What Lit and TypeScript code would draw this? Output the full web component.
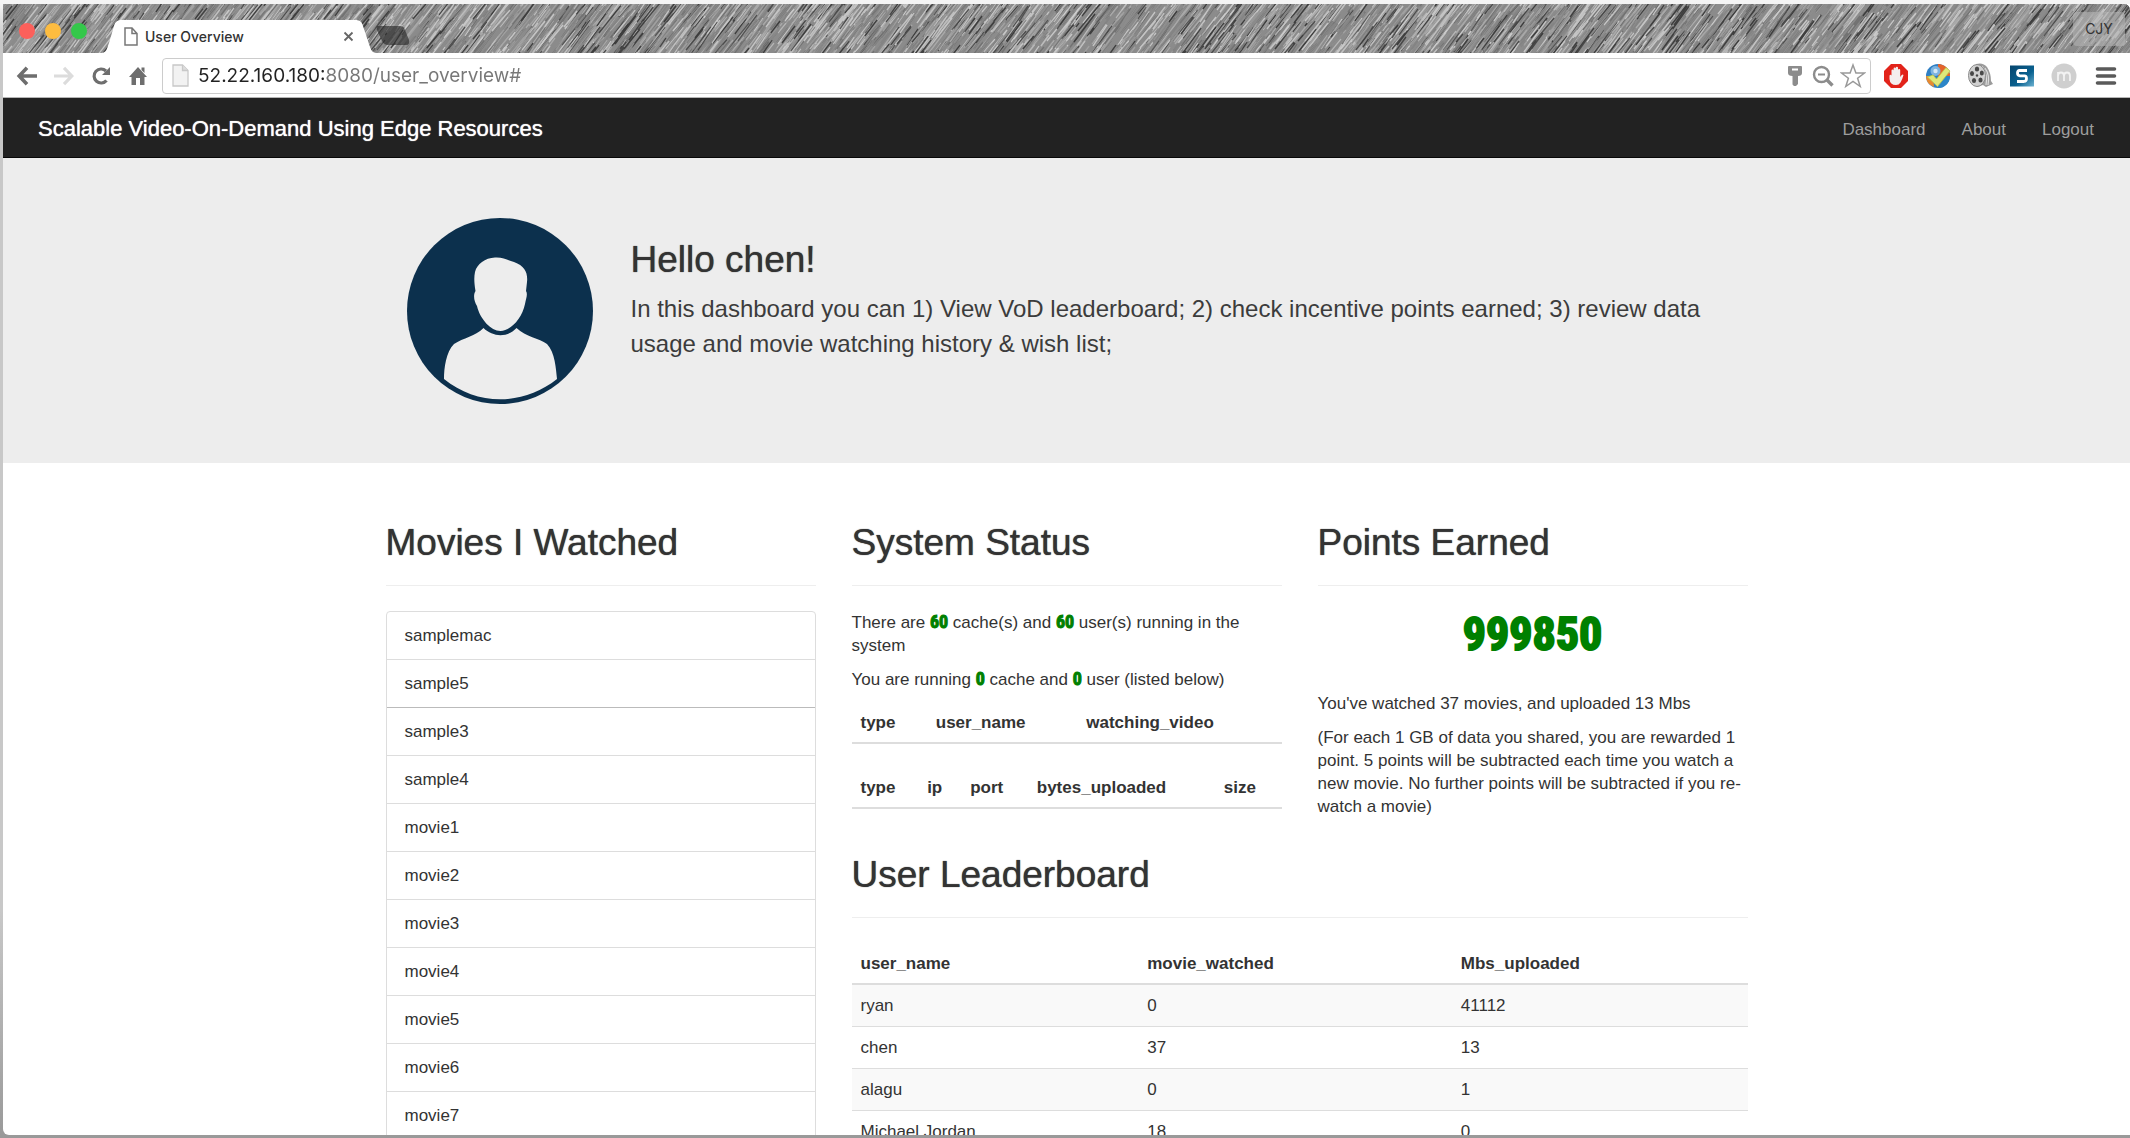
import { LitElement, html, css, svg } from "lit";
import { customElement } from "lit/decorators.js";

const movies = [
  "samplemac", "sample5", "sample3", "sample4", "movie1", "movie2",
  "movie3", "movie4", "movie5", "movie6", "movie7",
];

const leaders = [
  { name: "ryan", watched: 0, uploaded: 41112 },
  { name: "chen", watched: 37, uploaded: 13 },
  { name: "alagu", watched: 0, uploaded: 1 },
  { name: "Michael Jordan", watched: 18, uploaded: 0 },
];

/* Pencil strokes of the window theme, grouped by shade. */
function pencilStrokes(shadeCount: number, perShade: number): string[] {
  let seed = 20161;
  const rand = () => {
    seed = (seed * 1103515245 + 12345) % 2147483648;
    return seed / 2147483648;
  };
  const paths: string[] = [];
  for (let s = 0; s < shadeCount; s++) {
    let d = "";
    for (let i = 0; i < perShade; i++) {
      const x = Math.round(rand() * 2190 - 40);
      const y = Math.round(rand() * 80);
      const len = 8 + rand() * 26;
      const slope = 0.68 + rand() * 0.16;
      d += `M${x} ${y}l${Math.round(len * slope)} ${-Math.round(len)}`;
    }
    paths.push(d);
  }
  return paths;
}

const shades = ["#6a6a6a", "#b4b4b4", "#505050", "#c8c8c8", "#7c7c7c", "#404040", "#dadada", "#8e8e8e", "#a8a8a8", "#333", "#c8c8c8", "#858585", "#989898"];
const strokes = pencilStrokes(shades.length, 760);

@customElement("browser-chrome")
export class BrowserChrome extends LitElement {
  static styles = css`
    :host { display: block; font-family: Inter, Roboto, sans-serif; }
    * { box-sizing: border-box; }
    button { border: 0; padding: 0; background: none; display: flex; align-items: center; justify-content: center; }
    svg { display: block; }
    .strip {
      position: relative; height: 49px; overflow: hidden; background: #8b8b8b;
      display: flex; align-items: flex-end; padding-left: 16px; border-radius: 0 6px 0 0;
    }
    .texture { position: absolute; inset: 0; width: 100%; height: 100%; }
    .lights { position: relative; display: flex; gap: 10px; align-self: center; padding-top: 4px; }
    .light { width: 16px; height: 16px; border-radius: 50%; }
    .close { background: #fc605b; }
    .minimize { background: #fdbc40; }
    .expand { background: #34c84a; }
    .tab {
      position: relative; width: 274px; height: 33px; margin-left: 15px;
      display: flex; align-items: center; padding: 0 22px 0 22px;
    }
    .tabshape { position: absolute; inset: 0; }
    .tab > :not(.tabshape) { position: relative; }
    .tabtitle { font-size: 14px; font-weight: 500; line-height: 18px; color: #333; margin-left: 7px; flex: 1; }
    .newtab { position: relative; margin-bottom: 7px; }
    .profile {
      position: relative; margin: 0 5px 7px auto; width: 52px; height: 34px; border-radius: 4px;
      background: #b4b4b490; font: 14px/34px Inter, sans-serif; color: #333;
    }
    .toolbar {
      height: 45px; background: #fff; border-bottom: 1px solid #b5b5b5;
      display: flex; align-items: center; padding: 1px 11px 0 13px;
    }
    .nav { width: 22px; height: 24px; margin-right: 15px; }
    .nav:nth-of-type(4) { margin-right: 13px; }
    .omnibox {
      flex: 1; height: 36px; border: 1px solid #ccc; border-radius: 4px; background: #fff;
      display: flex; align-items: center; padding: 0 4px 0 9px; gap: 5px;
    }
    .url {
      flex: 1; min-width: 0; border: 0; outline: 0; padding: 0; margin-left: 4px; height: 28px;
      font: 19px/28px Inter, sans-serif; color: transparent;
      background: linear-gradient(90deg, #222 129px, #777 129px); background-clip: text; -webkit-background-clip: text;
    }
    .ext { display: flex; gap: 16px; margin-left: 12px; }
    .ext button { width: 26px; height: 26px; }
  `;

  render() {
    return html`
      <div class="strip">
        <svg class="texture" viewBox="0 0 2127 49" preserveAspectRatio="xMidYMid slice" fill="none" stroke-width="1.3" aria-hidden="true">
          ${strokes.map((d, i) => svg`<path d=${d} stroke=${shades[i]} stroke-opacity=".75" />`)}
        </svg>
        <div class="lights">
          <button class="light close" aria-label="Close window"></button>
          <button class="light minimize" aria-label="Minimize window"></button>
          <button class="light expand" aria-label="Expand window"></button>
        </div>
        <div class="tab">
          <svg class="tabshape" width="274" height="33" viewBox="0 0 274 33">
            <path d="M0 33C5 32 5 28 7 23L12 6C13 2 15 0 20 0H253C258 0 260 2 261 6L267 24C269 29 269 32 274 33Z" fill="#fff" />
          </svg>
          <svg width="14" height="19" viewBox="0 0 14 19" fill="none" stroke="#777" stroke-width="1.5">
            <path d="M1 1H8L13 6.500V18H1ZM8 1V6.500H13" />
          </svg>
          <span class="tabtitle">User Overview</span>
          <button aria-label="Close tab">
            <svg width="11" height="11" viewBox="0 0 11 11" stroke="#666" stroke-width="1.800"><path d="M1.500 1.500 9.500 9.500M9.500 1.500 1.500 9.500" /></svg>
          </button>
        </div>
        <button class="newtab" aria-label="New tab">
          <svg width="36" height="20" viewBox="0 0 36 20"><path d="M2 0H24Q28 0 29 4L33 14Q34 19 30 19H12Q8 19 6 15L1 4Q0 0 2 0Z" fill="#222" fill-opacity=".6" /></svg>
        </button>
        <button class="profile">CJY</button>
      </div>
      <div class="toolbar">
        <button class="nav" aria-label="Back">
          <svg width="22" height="20" viewBox="0 0 22 20" fill="none" stroke="#6e6e6e" stroke-width="3.600"><path d="M21 10H4M11 1.800 3.200 10 11 18.200" /></svg>
        </button>
        <button class="nav" aria-label="Forward">
          <svg width="22" height="20" viewBox="0 0 22 20" fill="none" stroke="#dcdcdc" stroke-width="3.200"><path d="M1 10H18M11 1.800 18.800 10 11 18.200" /></svg>
        </button>
        <button class="nav" aria-label="Reload">
          <svg width="20" height="20" viewBox="0 0 20 20"><path d="M15.500 14.500A7 7 0 1 1 15 5" fill="none" stroke="#6e6e6e" stroke-width="3.200" /><path d="M19 1V9H11Z" fill="#6e6e6e" /></svg>
        </button>
        <button class="nav" aria-label="Home">
          <svg width="18" height="20" viewBox="0 0 18 20" fill="#6e6e6e"><path d="M9 1 18 11H15.500V19H11V12H7V19H2.500V11H0ZM12.500 1.500H15.500V7L12.500 4Z" /></svg>
        </button>
        <div class="omnibox">
          <svg width="17" height="23" viewBox="0 0 17 23" fill="#f2f2f2" stroke="#c8c8c8" stroke-width="1.300">
            <path d="M1 1H10.500L16 6.500V22H1Z" /><path d="M10.500 1V6.500H16" fill="#ddd" />
          </svg>
          <input class="url" aria-label="Address" value="52.22.160.180:8080/user_overview#" />
          <button aria-label="Saved password">
            <svg width="22" height="24" viewBox="0 0 22 24" fill="#8c8c8c"><path fill-rule="evenodd" d="M5 2H17Q18 2 18 3V9Q18 12 14 12V20L12 22H10L8.500 20.500V12Q4 12 4 9V3Q4 2 5 2ZM8 4.500V6.500H14V4.500Z" /></svg>
          </button>
          <button aria-label="Zoom">
            <svg width="24" height="24" viewBox="0 0 24 24" fill="none" stroke="#8c8c8c"><circle cx="10.500" cy="10.500" r="7.500" stroke-width="2.400" /><path d="M16 16 21.500 21.500" stroke-width="3.400" /><path d="M7 10.500H14" stroke-width="1.800" /></svg>
          </button>
          <button aria-label="Bookmark this page">
            <svg width="26" height="26" viewBox="0 0 26 26" fill="#fff" stroke="#999" stroke-width="1.500"><path d="M13 2 15.900 10H24.500L17.600 15.200 20.200 23.500 13 18.500 5.800 23.500 8.400 15.200 1.500 10H10.100Z" /></svg>
          </button>
        </div>
        <div class="ext">
          <button aria-label="Ad blocker">
            <svg width="26" height="26" viewBox="0 0 26 26"><path d="M8 1H18L25 8V18L18 25H8L1 18V8Z" fill="#e2231a" /><path d="M6.500 13Q6.500 11.800 7.500 11.800T8.500 13V7.500Q8.500 6.500 9.500 6.500T10.600 7.500V5.500Q10.600 4.500 11.700 4.500T12.800 5.500V4.800Q12.800 3.700 13.900 3.700T15 4.800V7Q15 6 16.100 6T17.200 7V14L18.500 12.200Q19.500 11 20.500 12Q19.500 16 17.500 19.500Q16 22 13 22Q7 22 6.500 16Z" fill="#f4eeee" /></svg>
          </button>
          <button aria-label="Site check">
            <svg width="26" height="26" viewBox="0 0 26 26"><circle cx="13" cy="13" r="12" fill="#2f7fc4" /><path d="M13 1A12 12 0 0 1 25 13L13 13Z" fill="#e5642b" /><path d="M25 13A12 12 0 0 1 13 25V13Z" fill="#2c86c8" /><path d="M1 13A12 12 0 0 0 9 24L8 13Z" fill="#e98a30" /><circle cx="10.500" cy="8" r="5" fill="#7db4e0" /><circle cx="10.500" cy="8" r="2.200" fill="#d5e8f6" /><path d="M2.500 14 8 12 11.500 16 21 4.500 25 8 12.500 23.500Z" fill="#dfe87a" stroke="#b9c64a" stroke-width=".8" /></svg>
          </button>
          <button aria-label="Film library">
            <svg width="26" height="26" viewBox="0 0 26 26"><path d="M9 1Q16 -1 20 4Q24 10 24 18L26 21 19 24 16 22 10 24Z" fill="#9b9b9b" /><path d="M18 5Q23 12 21 22M15 3Q21 11 19 22" fill="none" stroke="#ddd" stroke-width="1.200" /><ellipse cx="10" cy="12.500" rx="8.500" ry="11" fill="#d0d0d0" stroke="#8a8a8a" /><g fill="#484848"><ellipse cx="10" cy="6" rx="2.200" ry="2.500" /><ellipse cx="5" cy="10.500" rx="2" ry="2.500" /><ellipse cx="14.800" cy="10" rx="2" ry="2.500" /><ellipse cx="7" cy="17.500" rx="2.100" ry="2.500" /><ellipse cx="13.500" cy="17" rx="2.100" ry="2.500" /><circle cx="10" cy="12.500" r="1.200" /></g></svg>
          </button>
          <button aria-label="S extension">
            <svg width="26" height="26" viewBox="0 0 26 26"><defs><linearGradient id="blue" x1="0" y1="0" x2="1" y2="1"><stop offset="0" stop-color="#05456d" /><stop offset=".6" stop-color="#0a6190" /><stop offset="1" stop-color="#6db3d2" /></linearGradient></defs><rect x="1" y="2.500" width="24" height="21" fill="url(#blue)" /><path d="M18 7.500H10.500Q8.500 7.500 8.500 10T11 12.800H15.500Q17.500 12.800 17.500 15.400T15 18.500H8" fill="none" stroke="#fff" stroke-width="2.800" /></svg>
          </button>
          <button aria-label="m extension">
            <svg width="26" height="26" viewBox="0 0 26 26"><circle cx="13" cy="13" r="12.500" fill="#cfcfcf" /><path d="M7 18V9M7 13Q7 9.500 10 9.500T13 13V18M13 13Q13 9.500 16 9.500T19 13V18" fill="none" stroke="#f2f2f2" stroke-width="1.800" /></svg>
          </button>
          <button aria-label="Menu">
            <svg width="22" height="20" viewBox="0 0 22 20" stroke="#5a5a5a" stroke-width="3.600" stroke-linecap="round"><path d="M2.500 3H19.500M2.500 10H19.500M2.500 17H19.500" /></svg>
          </button>
        </div>
      </div>
    `;
  }
}

@customElement("app-root")
export class AppRoot extends LitElement {
  static styles = css`
    :host {
      display: block; box-sizing: border-box; height: 100vh; overflow: hidden;
      padding: 4px 0 3px 3px; background: linear-gradient(#f4f4f4 4px, #c8c8c8 40px, #c8c8c8 80%, #999 100%);
      font: 17px/23px "Liberation Sans", Arial, sans-serif; color: #333;
    }
    * { box-sizing: border-box; }
    h1, h2, p, ul { margin: 0; padding: 0; font-weight: 400; }
    .window { height: 100%; overflow: hidden; background: #fff; border-radius: 0 0 0 6px; }
    .navbar {
      height: 60px; background: #222; border-bottom: 1px solid #080808;
      display: flex; align-items: center; justify-content: space-between; padding: 3px 36px 0 35px;
    }
    a { text-decoration: none; }
    .brand { color: #fff; font-size: 22px; line-height: 26px; text-shadow: 0 0 1px #fff; }
    .links { display: flex; gap: 36px; }
    .links a { color: #9d9d9d; }
    .container { max-width: 1362px; margin: 0 auto; }
    .hero { background: #ededed; padding: 60px 0 59px; }
    .intro { display: flex; gap: 38px; padding-left: 21px; }
    .avatar { flex: none; display: block; }
    .hello { padding-top: 21px; }
    h1, h2 { font-size: 37px; line-height: 41px; text-shadow: 0 0 1px #333; }
    h1 { margin-bottom: 11px; }
    .lead { font-size: 24px; line-height: 35px; color: #3c3c3c; }
    .content { display: grid; grid-template-columns: repeat(3, minmax(0, 1fr)); column-gap: 36px; padding-top: 59px; }
    .main { grid-column: span 2; }
    .stats { display: grid; grid-template-columns: repeat(2, minmax(0, 1fr)); column-gap: 36px; margin-bottom: 22px; }
    h2 { padding-bottom: 22px; border-bottom: 1px solid #eee; margin-bottom: 25px; }
    p { margin-bottom: 11px; }
    .list { list-style: none; border: 1px solid #ddd; border-radius: 4px; }
    .list li { padding: 12px 18px; border-bottom: 1px solid #ddd; }
    .list li:nth-child(2) { border-bottom-color: #bbb; }
    .num, .points { font-family: Impact, "Liberation Sans Narrow", "Roboto Condensed", sans-serif; font-weight: 700; color: #008000; }
    .num { font-size: 18px; line-height: 20px; -webkit-text-stroke: 1px #008000; }
    .points { font-size: 46px; line-height: 46px; text-align: center; margin-bottom: 35px; -webkit-text-stroke: 2px #008000; }
    table { width: 100%; table-layout: fixed; border-spacing: 0; margin-bottom: 23px; }
    th, td { text-align: left; padding: 9px; white-space: nowrap; }
    th { border-bottom: 2px solid #ddd; padding-bottom: 8px; }
    td { border-bottom: 1px solid #ddd; }
    tbody tr:nth-child(odd) { background: #f9f9f9; }
    .w15 { width: 15.5%; }
    .w10 { width: 10%; }
    .w17 { width: 17.5%; }
    .w35 { width: 35%; }
    .w44 { width: 43.5%; }
    .w32 { width: 32%; }
  `;

  render() {
    return html`
      <div class="window">
        <browser-chrome></browser-chrome>
        <nav class="navbar">
          <a class="brand" href="#">Scalable Video-On-Demand Using Edge Resources</a>
          <div class="links"><a href="#">Dashboard</a><a href="#">About</a><a href="#">Logout</a></div>
        </nav>
        <header class="hero">
          <div class="container intro">
            <svg class="avatar" width="186" height="186" viewBox="0 0 186 186" role="img" aria-label="User avatar">
              <circle cx="93" cy="93" r="93" fill="#0c304d" />
              <g fill="#ededed">
                <path d="M88 39.500C96 39 100 42 107 44C118 48 121 55 120 64L119 73C121 76 119 81 118 86C115 101 103 113 93.500 113C84 113 73 101 70 88C67 83 66 77 68.500 73C67 64 67 59 68 54C70 46 78 40 88 39.500Z" />
                <path d="M76.500 110C86 119.500 101 119.500 109.500 110C119 119 132 120 140 126C148 134 149 151 150 161C116 188 70 188 37 161C37 150 39 134 47 126C56 120 69 118 76.500 110Z" />
              </g>
            </svg>
            <div class="hello">
              <h1>Hello chen!</h1>
              <p class="lead">In this dashboard you can 1) View VoD leaderboard; 2) check incentive points earned; 3) review data usage and movie watching history &amp; wish list;</p>
            </div>
          </div>
        </header>
        <main class="container content">
          <section>
            <h2>Movies I Watched</h2>
            <ul class="list">${movies.map((m) => html`<li>${m}</li>`)}</ul>
          </section>
          <div class="main">
            <div class="stats">
              <section>
                <h2>System Status</h2>
                <p>There are <span class="num">60</span> cache(s) and <span class="num">60</span> user(s) running in the system</p>
                <p>You are running <span class="num">0</span> cache and <span class="num">0</span> user (listed below)</p>
                <table>
                  <thead><tr><th class="w17">type</th><th class="w35">user_name</th><th>watching_video</th></tr></thead>
                </table>
                <table>
                  <thead><tr><th class="w15">type</th><th class="w10">ip</th><th class="w15">port</th><th class="w44">bytes_uploaded</th><th>size</th></tr></thead>
                </table>
              </section>
              <section>
                <h2>Points Earned</h2>
                <div class="points">999850</div>
                <p>You've watched 37 movies, and uploaded 13 Mbs</p>
                <p>(For each 1 GB of data you shared, you are rewarded 1 point. 5 points will be subtracted each time you watch a new movie. No further points will be subtracted if you re-watch a movie)</p>
              </section>
            </div>
            <section>
              <h2>User Leaderboard</h2>
              <table>
                <thead><tr><th class="w32">user_name</th><th class="w35">movie_watched</th><th>Mbs_uploaded</th></tr></thead>
                <tbody>
                  ${leaders.map((l) => html`<tr><td>${l.name}</td><td>${l.watched}</td><td>${l.uploaded}</td></tr>`)}
                </tbody>
              </table>
            </section>
          </div>
        </main>
      </div>
    `;
  }
}
